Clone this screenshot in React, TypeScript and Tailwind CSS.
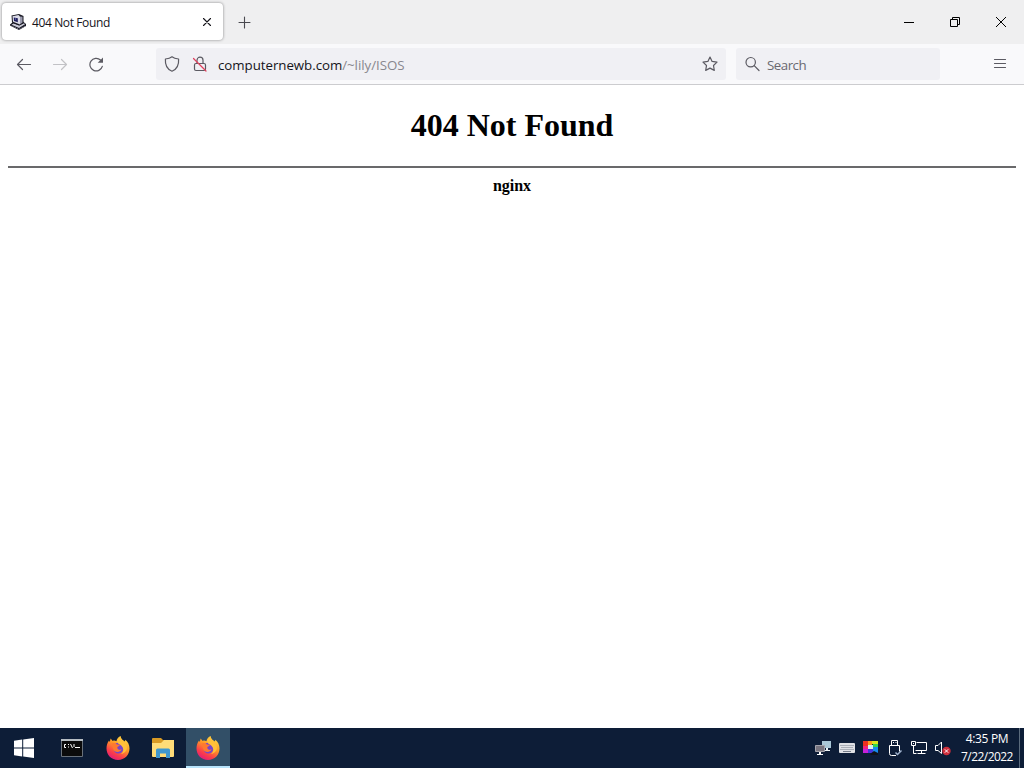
import type { ReactNode } from 'react';

function Icon({ children, className = '' }: { children: ReactNode; className?: string }) {
  return (
    <svg
      viewBox="0 0 16 16"
      fill="none"
      stroke="currentColor"
      strokeWidth="1.2"
      strokeLinecap="round"
      strokeLinejoin="round"
      className={`block size-4 shrink-0 ${className}`}
    >
      {children}
    </svg>
  );
}

function Favicon() {
  return (
    <svg viewBox="0 0 16 16" className="block size-4 shrink-0">
      <path d="M0 10.500 3 8l10-.5 3 2.500v2l-7 4-9-4.500Z" fill="#15151f" />
      <path d="m1.500 10.800 2-1.300 6 2 4.500-2.200 1 1-6 3.700Z" fill="#c9c9d6" />
      <path d="m1.500 12 7.500 3.300 6-3.200" stroke="#8b8b9c" fill="none" strokeDasharray="1 1" />
      <path d="M1.500 1.500 9 0l4.500 2v7L9 11.500 2 8.500Z" fill="#1a1a24" />
      <path d="m2.500 2.300 6-1.300 1.500 1.500v8L3 7.800Z" fill="#dcdce8" />
      <path d="m10 2.500 2.500.2v5.800L10 10.200Z" fill="#9a9aad" />
      <path d="m3.800 3.500 4 .8v4L4 7Z" fill="#20205e" />
      <path d="M5 4.500h1v1H5Z" fill="#8e8ed8" />
    </svg>
  );
}

function TabBar() {
  return (
    <div className="flex h-11 items-start bg-[#efeff0] text-[#15141a]">
      <div className="mt-[3px] ml-[2px] flex h-[37px] w-[221px] items-center rounded-[4px] bg-white px-2 shadow-[0_0_3px_rgba(0,0,0,0.45)]">
        <Favicon />
        <span className="ml-[6px] flex-1 pt-[2px] text-[12px] leading-4 tracking-[-0.38px] whitespace-nowrap">
          404 Not Found
        </span>
        <Icon>
          <path d="m4.500 4.500 7 7m0-7-7 7" strokeWidth="1.100" />
        </Icon>
      </div>
      <Icon className="mt-[14px] ml-[14px] text-[#4a4a50]">
        <path d="M7.500 3v11M2 8.500h11" strokeWidth="1.100" />
      </Icon>
      <div className="ml-auto flex text-black">
        <div className="flex h-11 w-[46px] items-center justify-center">
          <div className="h-px w-[10px] bg-black" />
        </div>
        <div className="flex h-11 w-[46px] items-center justify-center">
          <svg viewBox="0 0 10 10" className="size-[10px]" fill="none" stroke="currentColor">
            <path d="M.5 2.500h7v7h-7ZM2.500 2.500v-2h7v7h-2" />
          </svg>
        </div>
        <div className="flex h-11 w-[46px] items-center justify-center">
          <svg viewBox="0 0 10 10" className="size-[10px]" fill="none" stroke="currentColor">
            <path d="m0 0 10 10M10 0 0 10" />
          </svg>
        </div>
      </div>
    </div>
  );
}

function Toolbar() {
  return (
    <div className="flex h-[41px] items-center border-b border-[#cccccf] bg-[#f9f9fb] px-4 text-[#5b5a62]">
      <Icon>
        <path d="M14.500 8.500h-13M6.500 3.500l-5 5 5 5" />
      </Icon>
      <Icon className="ml-5 text-[#c2c2c6]">
        <path d="M1.500 8.500h13M9.500 3.500l5 5-5 5" />
      </Icon>
      <Icon className="ml-5">
        <path d="M14.300 10.300A6.300 6.300 0 1 1 12.500 4" />
        <path d="M15 1.500v5.300H9.700Z" fill="currentColor" stroke="none" />
      </Icon>
      <div className="ml-[52px] flex h-8 w-[570px] items-center rounded-[3px] bg-[#f0f0f4] px-2">
        <Icon>
          <path d="M8 .8c1.500 1.300 3.600 2 6.600 2.200.4 5.500-1.800 10.300-6.600 12.200C3.200 13.300 1 8.500 1.400 3 4.400 2.800 6.500 2.100 8 .8Z" />
        </Icon>
        <Icon className="ml-3">
          <path d="M5 7.500V4.200a3 3 0 0 1 6 0v3.300M4 7.500h8a1.500 1.500 0 0 1 1.500 1.500v4a1.500 1.500 0 0 1-1.500 1.500H4A1.500 1.500 0 0 1 2.500 13V9A1.500 1.500 0 0 1 4 7.500Z" />
          <path d="m1.500 2.500 12.500 12.500" stroke="#e0405c" />
        </Icon>
        <span className="ml-[10px] flex-1 pt-[2px] text-[13.3px] leading-5 tracking-[-0.04px] whitespace-nowrap text-[#15141a]">
          computernewb.com<span className="text-[#88878e]">/~lily/ISOS</span>
        </span>
        <Icon>
          <path d="m8 1 2.100 4.400 4.900.7-3.500 3.400.8 4.900L8 12.100l-4.300 2.300.8-4.900L1 6.100l4.900-.7Z" />
        </Icon>
      </div>
      <div className="ml-[10px] flex h-8 w-[204px] items-center rounded-[3px] bg-[#f0f0f4] px-2">
        <Icon>
          <circle cx="6.700" cy="6.200" r="4.700" />
          <path d="m10.200 9.700 4.800 4.800" />
        </Icon>
        <span className="ml-[7px] pt-[2px] text-[13.3px] leading-5 tracking-[-0.5px] text-[#6a6970]">Search</span>
      </div>
      <Icon className="ml-auto">
        <path d="M2.500 3.500h11M2.500 7.500h11M2.500 11.500h11" />
      </Icon>
    </div>
  );
}

function Firefox({ id }: { id: string }) {
  return (
    <svg viewBox="0 0 24 24" className="size-6">
      <defs>
        <linearGradient id={id} x1="0.8" y1="0" x2="0.25" y2="1">
          <stop offset="0" stopColor="#ffe64a" />
          <stop offset="0.42" stopColor="#ff9a26" />
          <stop offset="0.75" stopColor="#fb3d49" />
          <stop offset="1" stopColor="#de1781" />
        </linearGradient>
      </defs>
      <path
        d="M14.500 0c.4 2.300 1.500 3.300 3 4.600l1.500.9.300-1.700c2.700 2 4.200 5.200 4.200 8.700C23.500 19 18.600 24 12 24S.5 19 .5 12.500c0-3.200.8-5.600 2.500-8l.8 1.500.8-3.500 2.100 2.400c1.500-.5 2.700-.3 3.700.4C10.700 3 12.200 1.300 14.500 0Z"
        fill={`url(#${id})`}
      />
      <path d="M8 9.500c1-2 3-3 5.500-2.500 3 .7 4.700 3.500 4 6.300-.7 3-3.200 4.400-5.700 4.200-3.300-.3-5-3.300-3.800-8Z" fill="#7645cb" />
      <path d="M5.500 7.500c2-1 4.200-.5 5.500 1l3 .3c-.5 1.600-2.300 1.600-2.800 2.600.3 2.200 2.600 2.900 4.500 1.900-1.500 3.600-7.700 3.500-8.700-.6-.4-1.800-.4-3.300-1.500-5.200Z" fill="#ff792f" />
      <path d="M14.500.5c-3.400 2.200-4 5.300-2 7.300 2.500 1.200 4.500 2.700 4.800 5.700.2 2-1 3.700-2.600 4.500 4.300-.6 7-4 6-8-.9-3.600-5.300-4.200-6.200-9.500Z" fill="#ffc13a" />
    </svg>
  );
}

function Taskbar() {
  return (
    <div className="flex h-10 items-center bg-[#0d1d37] text-white">
      <div className="flex w-12 justify-center">
        <svg viewBox="0 0 20 20" className="size-5" fill="currentColor">
          <path d="m0 2.800 8.200-1.200v7.900H0ZM9.200 1.500 20 0v9.500H9.200ZM0 10.500h8.200v7.900L0 17.200ZM9.200 10.500H20V20L9.200 18.500Z" />
        </svg>
      </div>
      <div className="flex w-12 justify-center">
        <svg viewBox="0 0 24 20" className="h-5 w-6">
          <path d="M1.500 1.500h21v17h-21Z" fill="#0b0b0b" stroke="#69717a" />
          <path d="M1 1h22v2H1Z" fill="#b6bdc3" />
          <path d="M6 6.500H4.500v3H6M8.500 6v1M8.500 8.500v1M10.500 6l2 4M14 6v3M15 9.500h5" fill="none" stroke="#fff" />
        </svg>
      </div>
      <div className="flex w-[44px] justify-center">
        <Firefox id="fox-pinned" />
      </div>
      <div className="flex w-[46px] justify-center">
        <svg viewBox="0 0 24 20" className="h-5 w-6">
          <path d="M1 1q0-1 1-1h8l2 2h10q1 0 1 1v3H1Z" fill="#d99b25" />
          <path d="M1 5h9l3-3h10v16q0 1-1 1H2q-1 0-1-1Z" fill="#ffdc78" />
          <path d="M5 20v-8q0-1.500 1.500-1.500h11Q19 10.500 19 12v8h-4v-4.500H9V20Z" fill="#3f97cf" />
        </svg>
      </div>
      <div className="flex h-10 w-11 items-center justify-center border-b-2 border-[#b8e4fb] bg-[#324f67] pt-[2px]">
        <Firefox id="fox-active" />
      </div>

      {/* System tray */}
      <div className="ml-auto flex items-center gap-2">
        <svg viewBox="0 0 16 16" className="size-4">
          <path d="M7 1h9v7H7Z" fill="#a9c7d7" />
          <path d="M11 8h2v2h-2ZM10 10h5v1h-5Z" fill="#eef4f7" />
          <path d="M.5 5.500h9v6h-9Z" fill="#77747f" stroke="#a5a4ac" />
          <path d="M4 12h2v2H4ZM2 14h6v1H2Z" fill="#fff" />
        </svg>
        <svg viewBox="0 0 16 16" className="size-4">
          <rect y="3" width="16" height="10" rx="1" fill="#dfe1e5" />
          <path d="M1.500 5.500h13M2.500 7.500h12M1.500 9.500h13" stroke="#747c89" strokeDasharray="1 1" />
          <path d="M4 11.500h8" stroke="#747c89" />
        </svg>
        <svg viewBox="0 0 16 16" className="size-4">
          <path d="M0 1h5v5H0Z" fill="#ed3021" />
          <path d="M5 1h4v4H5Z" fill="#ff9c1d" />
          <path d="M9 1h6v3H9Z" fill="#d9e51f" />
          <path d="M10 4h5v3h-5Z" fill="#36d44d" />
          <path d="M0 6h5v3H0Z" fill="#ef247b" />
          <path d="M0 9h5v4H0Z" fill="#c721db" />
          <path d="M5 5h5v4H5Z" fill="#d9eff0" />
          <path d="M10 7h5v6h-5Z" fill="#168bea" />
          <path d="M5 9h5v4H5Z" fill="#4735dd" />
          <path d="m7 14 4-3 4 2v2H8Z" fill="#101218" />
        </svg>
        <svg viewBox="0 0 16 16" className="size-4" fill="none" stroke="currentColor">
          <path d="M4.500 5.500v-5h6v5M9 15.500H4.500a2 2 0 0 1-2-2v-8h10v6M6 2.500h1M8.500 2.500h1" />
          <path d="m8.500 12.500 2 2 4-4" stroke="#9eb1cc" strokeWidth="1.500" />
        </svg>
        <svg viewBox="0 0 16 16" className="size-4" fill="none" stroke="currentColor">
          <path d="M5.500 2.500h10v8H4.500M10.500 10.500v3M6.500 13.500h8M2.500 5.500v8h3M.5 1.500h4v4h-4ZM2 3.500h1" />
        </svg>
        <svg viewBox="0 0 16 16" className="size-4">
          <path d="M6.500 13.500 3 10.500H.5v-5H3l3.500-3.500" fill="none" stroke="#fff" />
          <path d="M6.500 2v11.500" stroke="#fff" />
          <circle cx="11.500" cy="11" r="4.200" fill="#cf2e3b" />
          <path d="m9.800 9.300 3.400 3.400m0-3.400-3.400 3.400" stroke="#fff" />
        </svg>
      </div>
      <div className="ml-[7px] w-[58px] text-center text-[12px] leading-[18px] whitespace-nowrap">
        <div className="tracking-[-0.35px]">4:35 PM</div>
        <div className="tracking-[-0.55px]">7/22/2022</div>
      </div>
      <div className="ml-[3px] h-10 w-[5px] border-l border-[#5b6b7d]" />
    </div>
  );
}

export default function App() {
  return (
    <div className="flex h-screen w-screen flex-col overflow-hidden bg-white font-['Open_Sans','Noto_Sans',sans-serif]">
      <TabBar />
      <Toolbar />
      {/* Error page */}
      <main className="flex-1 px-2 text-center font-['Liberation_Serif',serif] font-bold text-black">
        <h1 className="pt-[22px] text-[32px] leading-[37px]">404 Not Found</h1>
        <hr className="mt-[22px] h-[2px] border-0 bg-[#69696b]" />
        <p className="mt-[9px] text-[16px] leading-[18px]">nginx</p>
      </main>
      <Taskbar />
    </div>
  );
}
